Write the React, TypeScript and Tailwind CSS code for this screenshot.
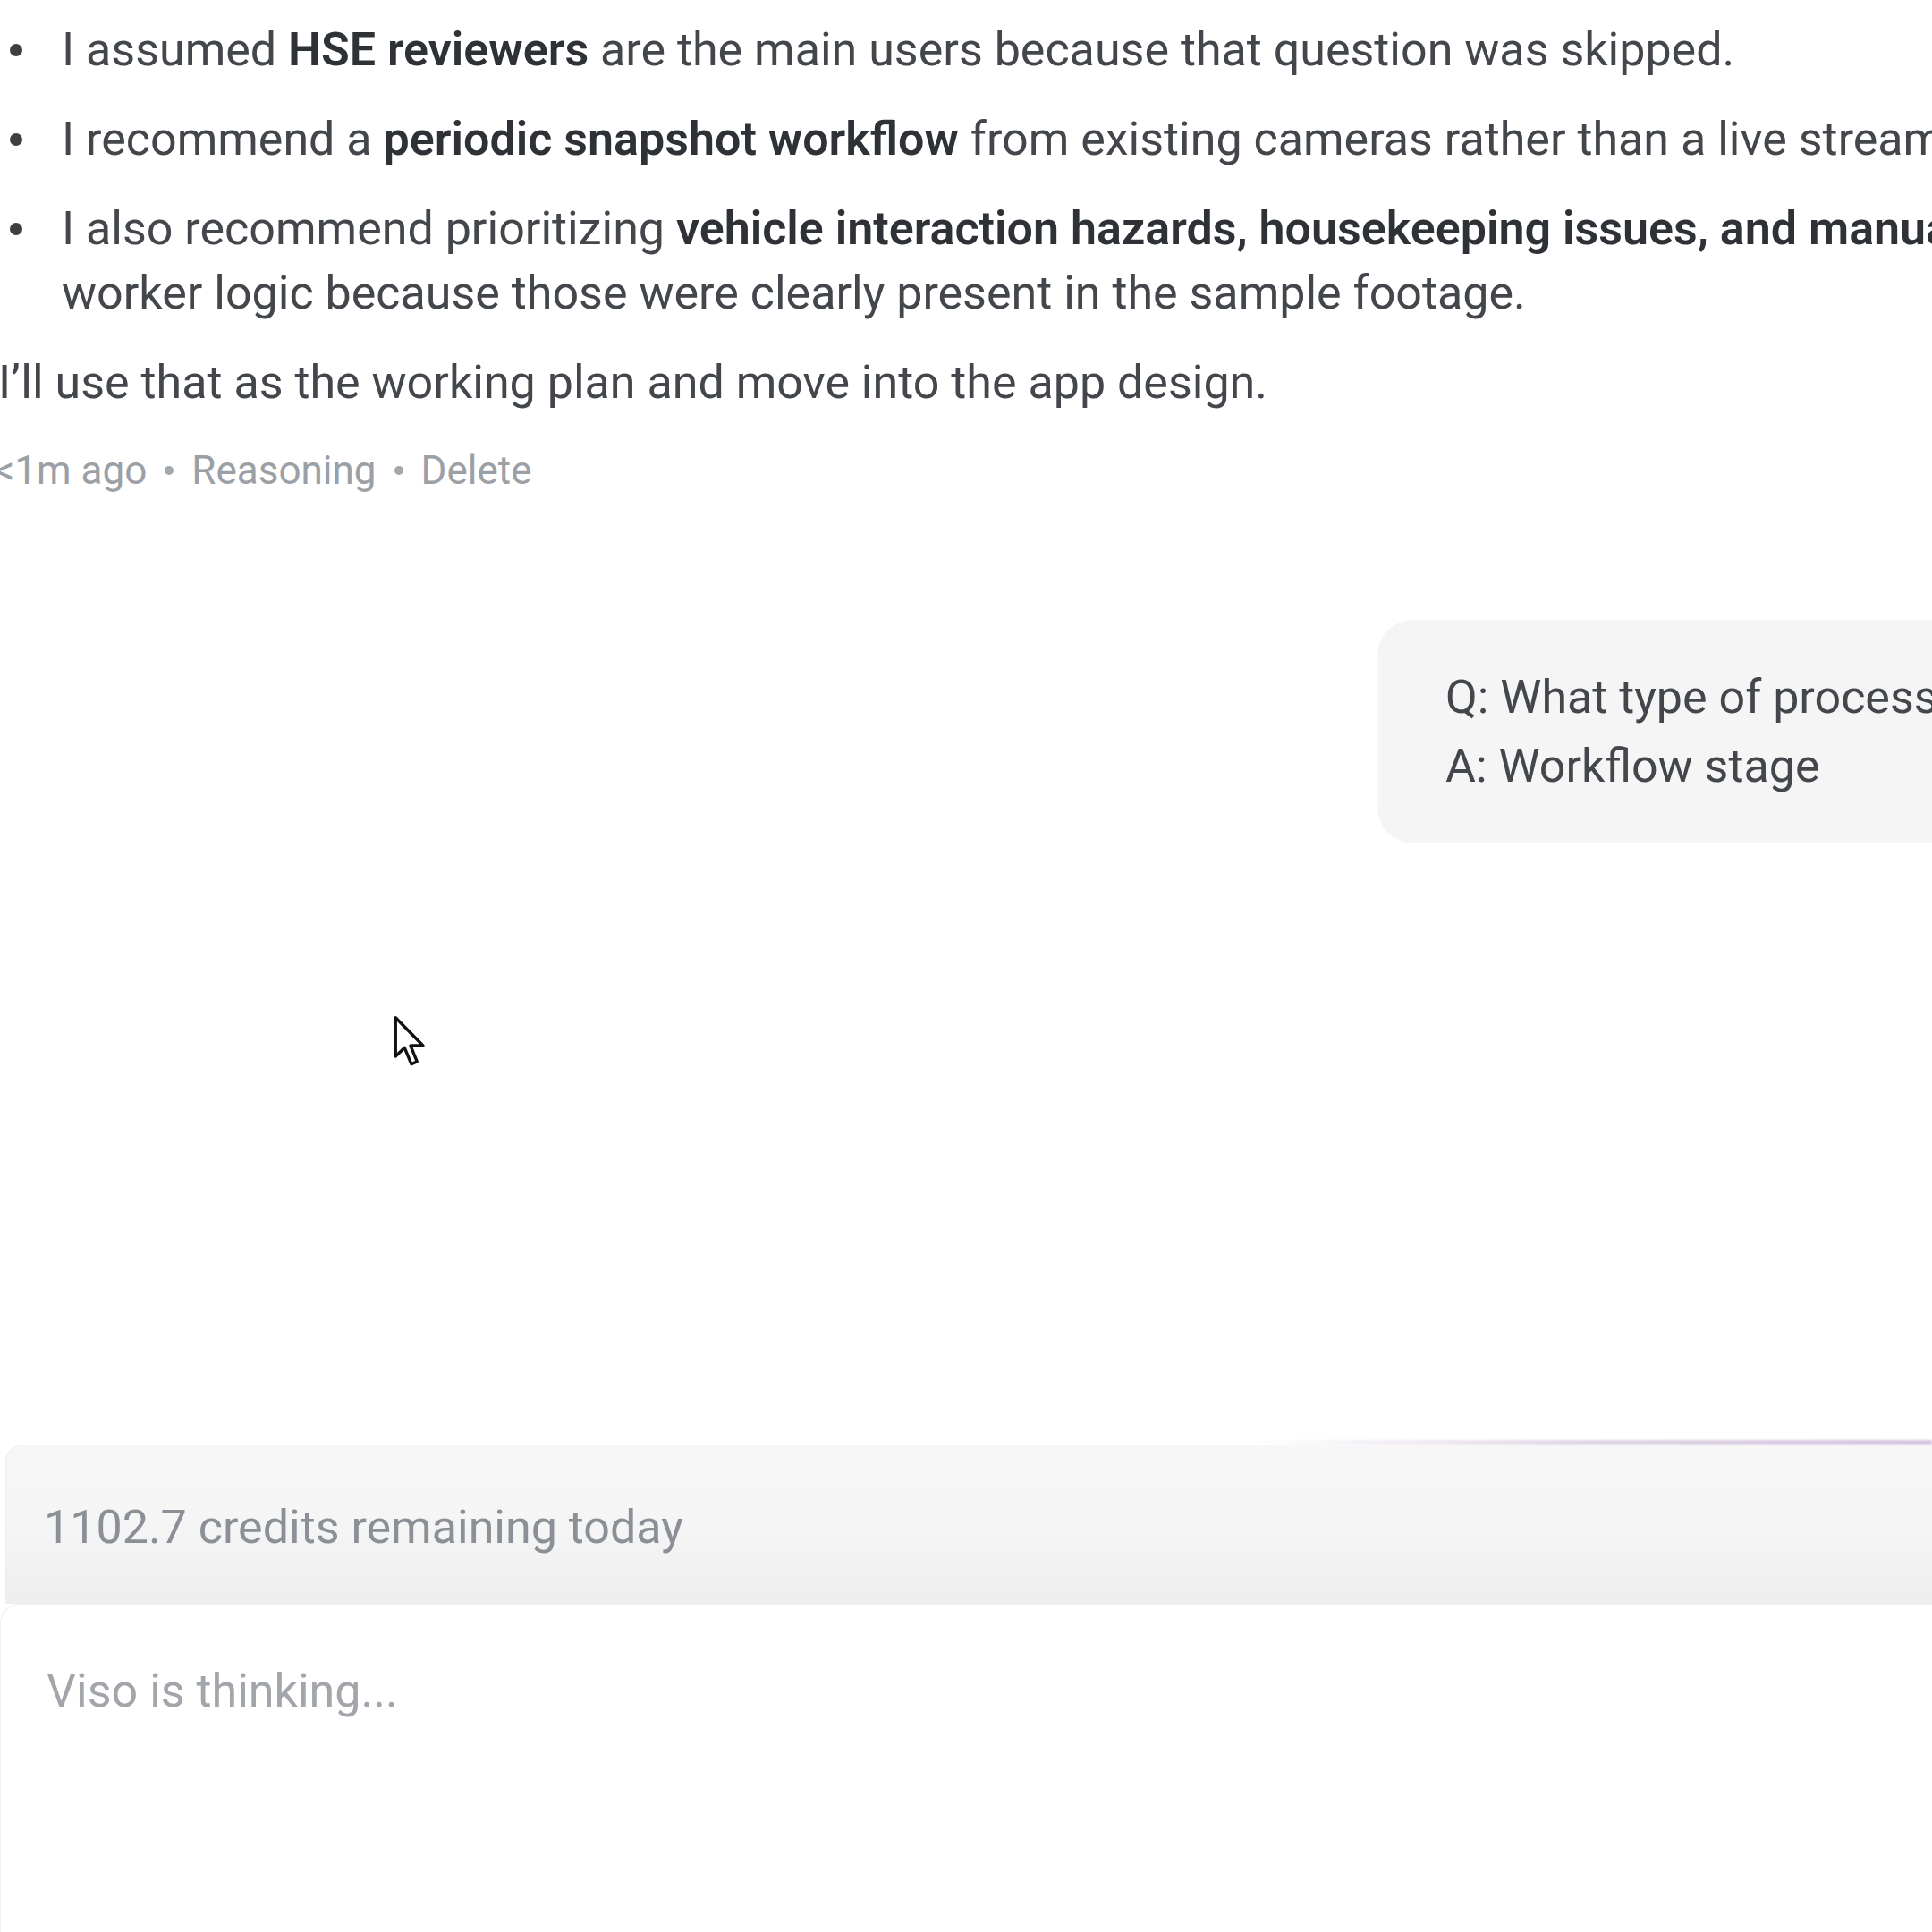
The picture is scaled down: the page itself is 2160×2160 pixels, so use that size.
import React from 'react';

const Bullet = ({ children }: { children: React.ReactNode }) => (
  <li className="flex items-start">
    <span className="mt-[29px] ml-[13px] w-[14px] h-[14px] rounded-full bg-[#3c4043] shrink-0" />
    <p className="ml-[44px] whitespace-nowrap text-[52px] leading-[72px] text-[#43474c]">{children}</p>
  </li>
);

const B = ({ children }: { children: React.ReactNode }) => (
  <strong className="font-semibold text-[#2e3236]">{children}</strong>
);

function Cursor() {
  return (
    <svg className="absolute left-[439px] top-[1135px]" width="40" height="60" viewBox="0 0 14 21.5">
      <path
        d="M1 1 L1 16.5 L4.6 13 L7.3 19.6 L9.6 18.6 L7 12.2 L12 12.2 Z"
        fill="#fff"
        stroke="#111"
        strokeWidth="1.2"
        strokeLinejoin="round"
      />
    </svg>
  );
}

export default function App() {
  return (
    <div className="relative w-[2160px] h-[2160px] overflow-hidden bg-white font-[Roboto,'Noto_Sans',sans-serif]">
      <div className="flex flex-col h-full">
        {/* conversation */}
        <div className="flex-1 ml-[-2px] pt-[20px]">
          <ul className="flex flex-col gap-[28px]">
            <Bullet>
              I assumed <B>HSE reviewers</B> are the main users because that question was skipped.
            </Bullet>
            <Bullet>
              I recommend a <B>periodic snapshot workflow</B> from existing cameras rather than a live stream.
            </Bullet>
            <Bullet>
              I also recommend prioritizing <B>vehicle interaction hazards, housekeeping issues, and manual</B>
              <br />
              worker logic because those were clearly present in the sample footage.
            </Bullet>
          </ul>
          <p className="mt-[28px] whitespace-nowrap text-[52px] leading-[72px] text-[#43474c]">
            I’ll use that as the working plan and move into the app design.
          </p>
          <div className="mt-[34px] ml-[-4px] flex items-center whitespace-nowrap text-[44px] leading-[56px] text-[#9ba0a6]">
            <span>&lt;1m ago</span>
            <span className="mx-[20px] w-[10px] h-[10px] rounded-full bg-[#a3a8ad]" />
            <span>Reasoning</span>
            <span className="mx-[20px] w-[10px] h-[10px] rounded-full bg-[#a3a8ad]" />
            <span>Delete</span>
          </div>

          <div className="mt-[139px] ml-[1542px] w-[900px] rounded-[40px] bg-[#f5f5f6] pl-[76px] py-[48px] text-[52px] leading-[77px] text-[#43474c] whitespace-nowrap">
            <p>Q: What type of processes should Viso monitor?</p>
            <p>A: Workflow stage</p>
          </div>
        </div>

        {/* composer */}
        <div className="h-[545px] flex flex-col">
          <div className="relative ml-[6px] h-[178px] rounded-tl-[20px] border-t border-l border-[#eeeeef] bg-gradient-to-b from-[#f7f7f8] via-[#f5f5f6] to-[#eeeeef] pl-[42px] pt-[56px]">
            <div className="absolute right-0 top-[-6px] w-[760px] h-[5px] bg-gradient-to-r from-transparent via-[#e0d4e6] to-[#d6c4df] blur-[1px]" />
            <p className="text-[52px] leading-[72px] text-[#8b9096] whitespace-nowrap">1102.7 credits remaining today</p>
          </div>
          <div className="flex-1 rounded-tl-[22px] border-t border-l border-[#f0f0f1] bg-white pl-[51px] pt-[61px]">
            <p className="text-[52px] leading-[72px] text-[#a2a6ab] whitespace-nowrap">Viso is thinking...</p>
          </div>
        </div>
      </div>
      <Cursor />
    </div>
  );
}
